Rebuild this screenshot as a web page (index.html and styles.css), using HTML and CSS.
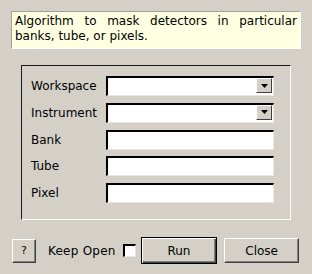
FILE: index.html
```html
<!DOCTYPE html>
<html lang="en">
<head>
    <meta charset="UTF-8">
    <title>MaskDetectors</title>
    <link rel="stylesheet" href="styles.css">
</head>
<body>
    <div class="dialog">
        <p class="desc">Algorithm to mask detectors in particular banks, tube, or pixels.</p>

        <div class="group">
            <div class="row">
                <span class="label">Workspace</span>
                <div class="field combo">
                    <span class="arrow"><svg width="7" height="4" viewBox="0 0 7 4"><polygon points="0,0 7,0 3.5,4" fill="#000"/></svg></span>
                </div>
            </div>
            <div class="row">
                <span class="label">Instrument</span>
                <div class="field combo">
                    <span class="arrow"><svg width="7" height="4" viewBox="0 0 7 4"><polygon points="0,0 7,0 3.5,4" fill="#000"/></svg></span>
                </div>
            </div>
            <div class="row">
                <span class="label">Bank</span>
                <div class="field"></div>
            </div>
            <div class="row">
                <span class="label">Tube</span>
                <div class="field"></div>
            </div>
            <div class="row">
                <span class="label">Pixel</span>
                <div class="field"></div>
            </div>
        </div>

        <div class="buttons">
            <button class="btn help">?</button>
            <span class="keep">Keep Open</span>
            <span class="check"></span>
            <button class="btn run">Run</button>
            <button class="btn close">Close</button>
        </div>
    </div>
</body>
</html>
```

FILE: styles.css
```css
body {
    margin: 0;
    background: #d4d0c8;
    font-family: "DejaVu Sans", sans-serif;
    font-size: 12px;
    color: #000;
}
.dialog {
    width: 312px;
    height: 274px;
    box-sizing: border-box;
    padding: 11px 11px 0 11px;
}
.desc {
    margin: 0;
    padding: 2px 3px 0 3px;
    box-sizing: border-box;
    height: 38px;
    background: #ffffe1;
    border-top: 1px solid #a0a0a0;
    border-left: 1px solid #a0a0a0;
    border-right: 1px solid #fff;
    border-bottom: 1px solid #fff;
    line-height: 15px;
    text-align: justify;
}
.group {
    margin: 16px 10px 0 10px;
    height: 155px;
    box-sizing: border-box;
    border-top: 1px solid #1a1a1a;
    border-left: 1px solid #1a1a1a;
    border-right: 1px solid #fff;
    border-bottom: 1px solid #fff;
    padding: 10px 16px 0 9px;
    display: flex;
    flex-direction: column;
    gap: 6.75px;
}
.row {
    display: flex;
    align-items: center;
    justify-content: space-between;
    height: 20px;
}
.field {
    width: 168px;
    height: 20px;
    box-sizing: border-box;
    background: #fff;
    border-top: 2px solid #000;
    border-left: 2px solid #000;
    border-right: 1px solid #e8e6e2;
    border-bottom: 1px solid #e8e6e2;
    box-shadow: 1px 1px 0 #d4d0c8;
    display: flex;
    justify-content: flex-end;
}
.arrow {
    width: 16px;
    height: 15px;
    margin: 0 1px 0 0;
    box-sizing: border-box;
    background: #d4d0c8;
    border-top: 1px solid #fff;
    border-left: 1px solid #fff;
    border-right: 1px solid #404040;
    border-bottom: 1px solid #404040;
    display: flex;
    align-items: center;
    justify-content: center;
}
.arrow svg {
    display: block;
}
.buttons {
    display: flex;
    align-items: center;
    margin: 17px 2px 0 1px;
}
.btn {
    font-family: "DejaVu Sans", sans-serif;
    font-size: 12px;
    color: #000;
    background: #d4d0c8;
    height: 25px;
    padding: 0;
    box-sizing: border-box;
    border-top: 1px solid #fff;
    border-left: 1px solid #fff;
    border-right: 1px solid #404040;
    border-bottom: 1px solid #404040;
    box-shadow: inset -1px -1px 0 #808080;
}
.help {
    width: 24px;
    height: 24px;
    font-size: 11px;
}
.keep {
    margin-left: 12px;
    width: 75px;
    letter-spacing: 0.25px;
}
.check {
    width: 13px;
    height: 13px;
    box-sizing: border-box;
    background: #fff;
    border-top: 2px solid #000;
    border-left: 2px solid #000;
    border-right: 1px solid #e8e6e2;
    border-bottom: 1px solid #e8e6e2;
}
.run {
    margin-left: 5px;
    width: 77px;
    height: 27px;
    border: 1px solid #000;
    box-shadow: inset 1px 1px 0 #fff, inset -1px -1px 0 #404040, inset -2px -2px 0 #808080;
}
.close {
    margin-left: 7px;
    width: 75px;
}
```
